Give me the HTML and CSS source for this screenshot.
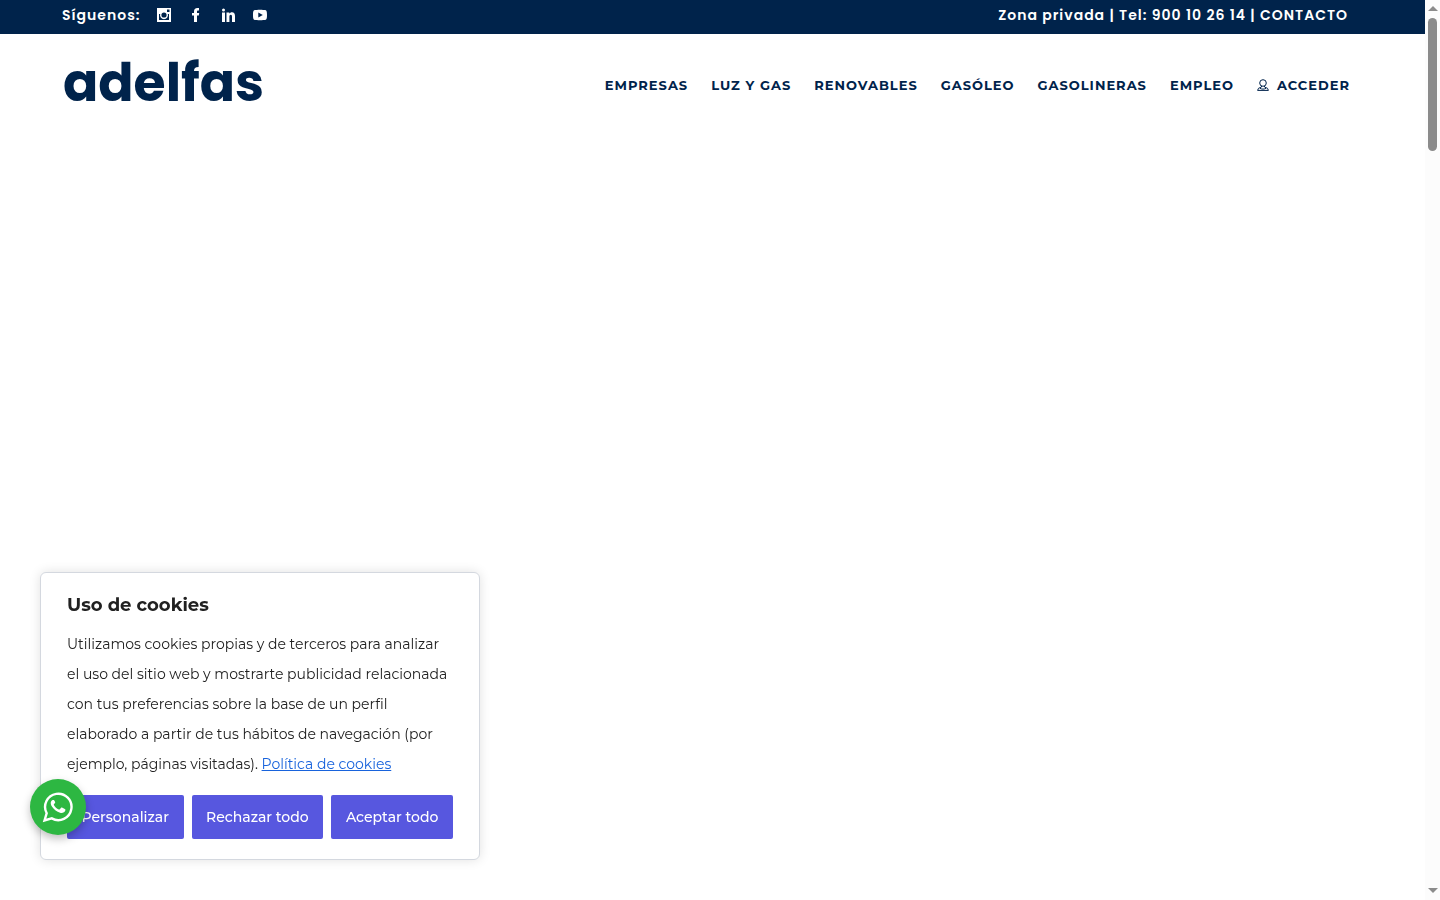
FILE: index.html
```html
<!DOCTYPE html>
<html lang="es">
<head>
    <meta charset="UTF-8" />
    <meta name="viewport" content="width=device-width, initial-scale=1" />
    <title>adelfas</title>
    <link rel="stylesheet" href="styles.css">
</head>
<body>
    <div class="page">
        <div class="top-bar">
            <div class="social">
                <span>Síguenos:</span>
                <a href="#" aria-label="Instagram">
                    <svg viewBox="0 0 16 16" width="16" height="16" fill="currentColor">
                        <path fill-rule="evenodd" d="M1 1h14v14H1zM3 7v6h10V7h-1.2a4 4 0 1 1-7.6 0zM11 2.5v2.6h2.5V2.500zM8 5.400a2.600 2.600 0 1 0 0 5.200 2.600 2.600 0 0 0 0-5.200z"/>
                    </svg>
                </a>
                <a href="#" aria-label="Facebook">
                    <svg viewBox="0 0 16 16" width="16" height="16" fill="currentColor">
                        <path d="M6 15V8.500H4V6h2V4.500C6 2.200 7.200 1 9.400 1H11v2.500h-.8C9.300 3.500 9 3.900 9 4.800V6h2.200l-.4 2.500H9V15z"/>
                    </svg>
                </a>
                <a href="#" aria-label="LinkedIn">
                    <svg viewBox="0 0 16 16" width="16" height="16" fill="currentColor">
                        <circle cx="3.500" cy="3" r="1.500"/>
                        <path d="M2 5.500h3V15H2zM6.500 5.500h2.800v1.300c.6-1 1.600-1.500 2.700-1.500 2.100 0 3 1.400 3 3.700v6h-3V9.700c0-1.300-.3-2-1.200-2-1 0-1.400.8-1.400 2V15H6.500z"/>
                    </svg>
                </a>
                <a href="#" aria-label="YouTube">
                    <svg viewBox="0 0 16 16" width="16" height="16" fill="currentColor">
                        <path fill-rule="evenodd" d="M3.500 3C8 2.700 8 2.700 12.500 3 14.500 3 15 4 15 8s-.5 5-2.500 5c-4.500.3-4.500.3-9 0C1.500 13 1 12 1 8s.5-5 2.500-5zM6.300 5.400v5.200L10.800 8z"/>
                    </svg>
                </a>
            </div>
            <div class="contact">
                <a href="#">Zona privada</a> | Tel: <a href="tel:900102614">900 10 26 14</a> | <a href="#">CONTACTO</a>
            </div>
        </div>

        <header class="header">
            <a class="logo" href="#">adelfas</a>
            <nav class="menu">
                <a href="#">EMPRESAS</a>
                <a href="#">LUZ Y GAS</a>
                <a href="#">RENOVABLES</a>
                <a href="#">GASÓLEO</a>
                <a href="#">GASOLINERAS</a>
                <a href="#">EMPLEO</a>
                <a class="login" href="#">
                    <svg viewBox="0 0 12 12" width="12" height="12" fill="none" stroke="currentColor">
                        <circle cx="6" cy="4" r="3.300"/>
                        <path d="M4.500 7v1L1.500 9.300.600 11.400h10.800l-.9-2.100L7.500 8V7M3 9.200c1.500 1.200 4.500 1.200 6 0"/>
                    </svg>
                    ACCEDER
                </a>
            </nav>
        </header>
    </div>

    <!-- Scroll track -->
    <div class="scroll" aria-hidden="true">
        <span class="arrow-up"></span>
        <span class="thumb"></span>
        <span class="arrow-down"></span>
    </div>

    <section class="cookies">
        <h2>Uso de cookies</h2>
        <p>Utilizamos cookies propias y de terceros para analizar el uso del sitio web y mostrarte publicidad relacionada con tus preferencias sobre la base de un perfil elaborado a partir de tus hábitos de navegación (por ejemplo, páginas visitadas). <a href="#">Política de cookies</a></p>
        <div class="buttons">
            <button type="button">Personalizar</button>
            <button type="button">Rechazar todo</button>
            <button type="button">Aceptar todo</button>
        </div>
    </section>

    <a class="whatsapp" href="#" aria-label="WhatsApp">
        <svg viewBox="0 0 32 32" width="32" height="32">
            <path d="M2.500 29.500l2.200-7.300A13.200 13.200 0 1 1 9.800 27.400z" fill="none" stroke="#fff" stroke-width="2.400"/>
            <path d="M12.500 9.800c-.4-.9-.8-.9-1.200-.9-.9 0-1.600.4-2.100 1.300-1 1.700-.3 3.900.9 5.600 2 2.900 4.600 5 8 6 2.200.7 4.800-.4 5.200-2.300.2-1.100.1-1.300-.5-1.600l-2.800-1.300c-.5-.2-.8-.1-1.100.3l-1.100 1.300c-.3.400-.6.400-1 .2-2.200-.9-3.700-2.300-4.900-4.400-.3-.4-.1-.7.200-1l.9-1.100c.3-.4.200-.6.100-1z" fill="#fff"/>
        </svg>
    </a>
</body>
</html>
```
FILE: styles.css
```css
* {
    box-sizing: border-box;
}
body {
    margin: 0;
    display: flex;
    min-height: 100vh;
    font-family: Montserrat, Inter, sans-serif;
    background: #fff;
    color: #212121;
}
a {
    color: inherit;
    text-decoration: none;
}
svg {
    display: block;
}
.page {
    flex: 1;
}
.top-bar {
    display: flex;
    justify-content: space-between;
    padding: 3px 77px 7px 62px;
    background: #00234b;
    color: #fff;
    font-family: Poppins, Inter, sans-serif;
    font-size: 14px;
    font-weight: 600;
    line-height: 24px;
    letter-spacing: 1px;
}
.social {
    display: flex;
    align-items: center;
    gap: 16px;
}
.header {
    display: flex;
    justify-content: space-between;
    align-items: center;
    height: 102px;
    padding: 0 75px 0 63px;
    color: #00234b;
}
.logo {
    font-family: Poppins, Inter, sans-serif;
    font-size: 52px;
    font-weight: 700;
    line-height: 80px;
    padding-bottom: 4px;
}
.menu {
    display: flex;
    gap: 23px;
    font-size: 13px;
    font-weight: 700;
    line-height: 20px;
    letter-spacing: 1px;
}
.login {
    display: flex;
    align-items: center;
    gap: 8px;
}
.scroll {
    display: flex;
    flex-direction: column;
    align-items: center;
    width: 15px;
    height: 100vh;
    padding: 6px 0 7px;
    background: #fcfcfc;
}
.arrow-up,
.arrow-down {
    border: 5px solid transparent;
}
.arrow-up {
    border-top: 0;
    border-bottom-color: #8b8b8b;
}
.arrow-down {
    margin-top: auto;
    border-bottom: 0;
    border-top-color: #8b8b8b;
}
.thumb {
    width: 9px;
    height: 15%;
    margin-top: 7px;
    border-radius: 5px;
    background: #8b8b8b;
}
.cookies {
    position: fixed;
    left: 40px;
    bottom: 40px;
    width: 440px;
    padding: 20px 26px;
    background: #fff;
    border: 1px solid #d4d8df;
    border-radius: 6px;
    box-shadow: 0 0 12px rgba(0, 0, 0, 0.12);
}
.cookies h2 {
    margin: 0 0 12px;
    font-size: 18px;
    font-weight: 700;
    line-height: 24px;
}
.cookies p {
    margin: 0 0 16px;
    font-size: 14px;
    line-height: 30px;
}
.cookies p a {
    color: #1863dc;
    text-decoration: underline;
}
.buttons {
    display: flex;
    gap: 8px;
}
.buttons button {
    flex: 1 1 auto;
    height: 44px;
    padding: 0 8px;
    border: 0;
    border-radius: 2px;
    background: #5757df;
    color: #fff;
    font-family: inherit;
    font-size: 14px;
    font-weight: 500;
    cursor: pointer;
}
.whatsapp {
    position: fixed;
    left: 30px;
    bottom: 65px;
    display: flex;
    align-items: center;
    justify-content: center;
    width: 56px;
    height: 56px;
    border-radius: 50%;
    background: #2db742;
    box-shadow: 0 4px 8px rgba(0, 0, 0, 0.25);
}
```
